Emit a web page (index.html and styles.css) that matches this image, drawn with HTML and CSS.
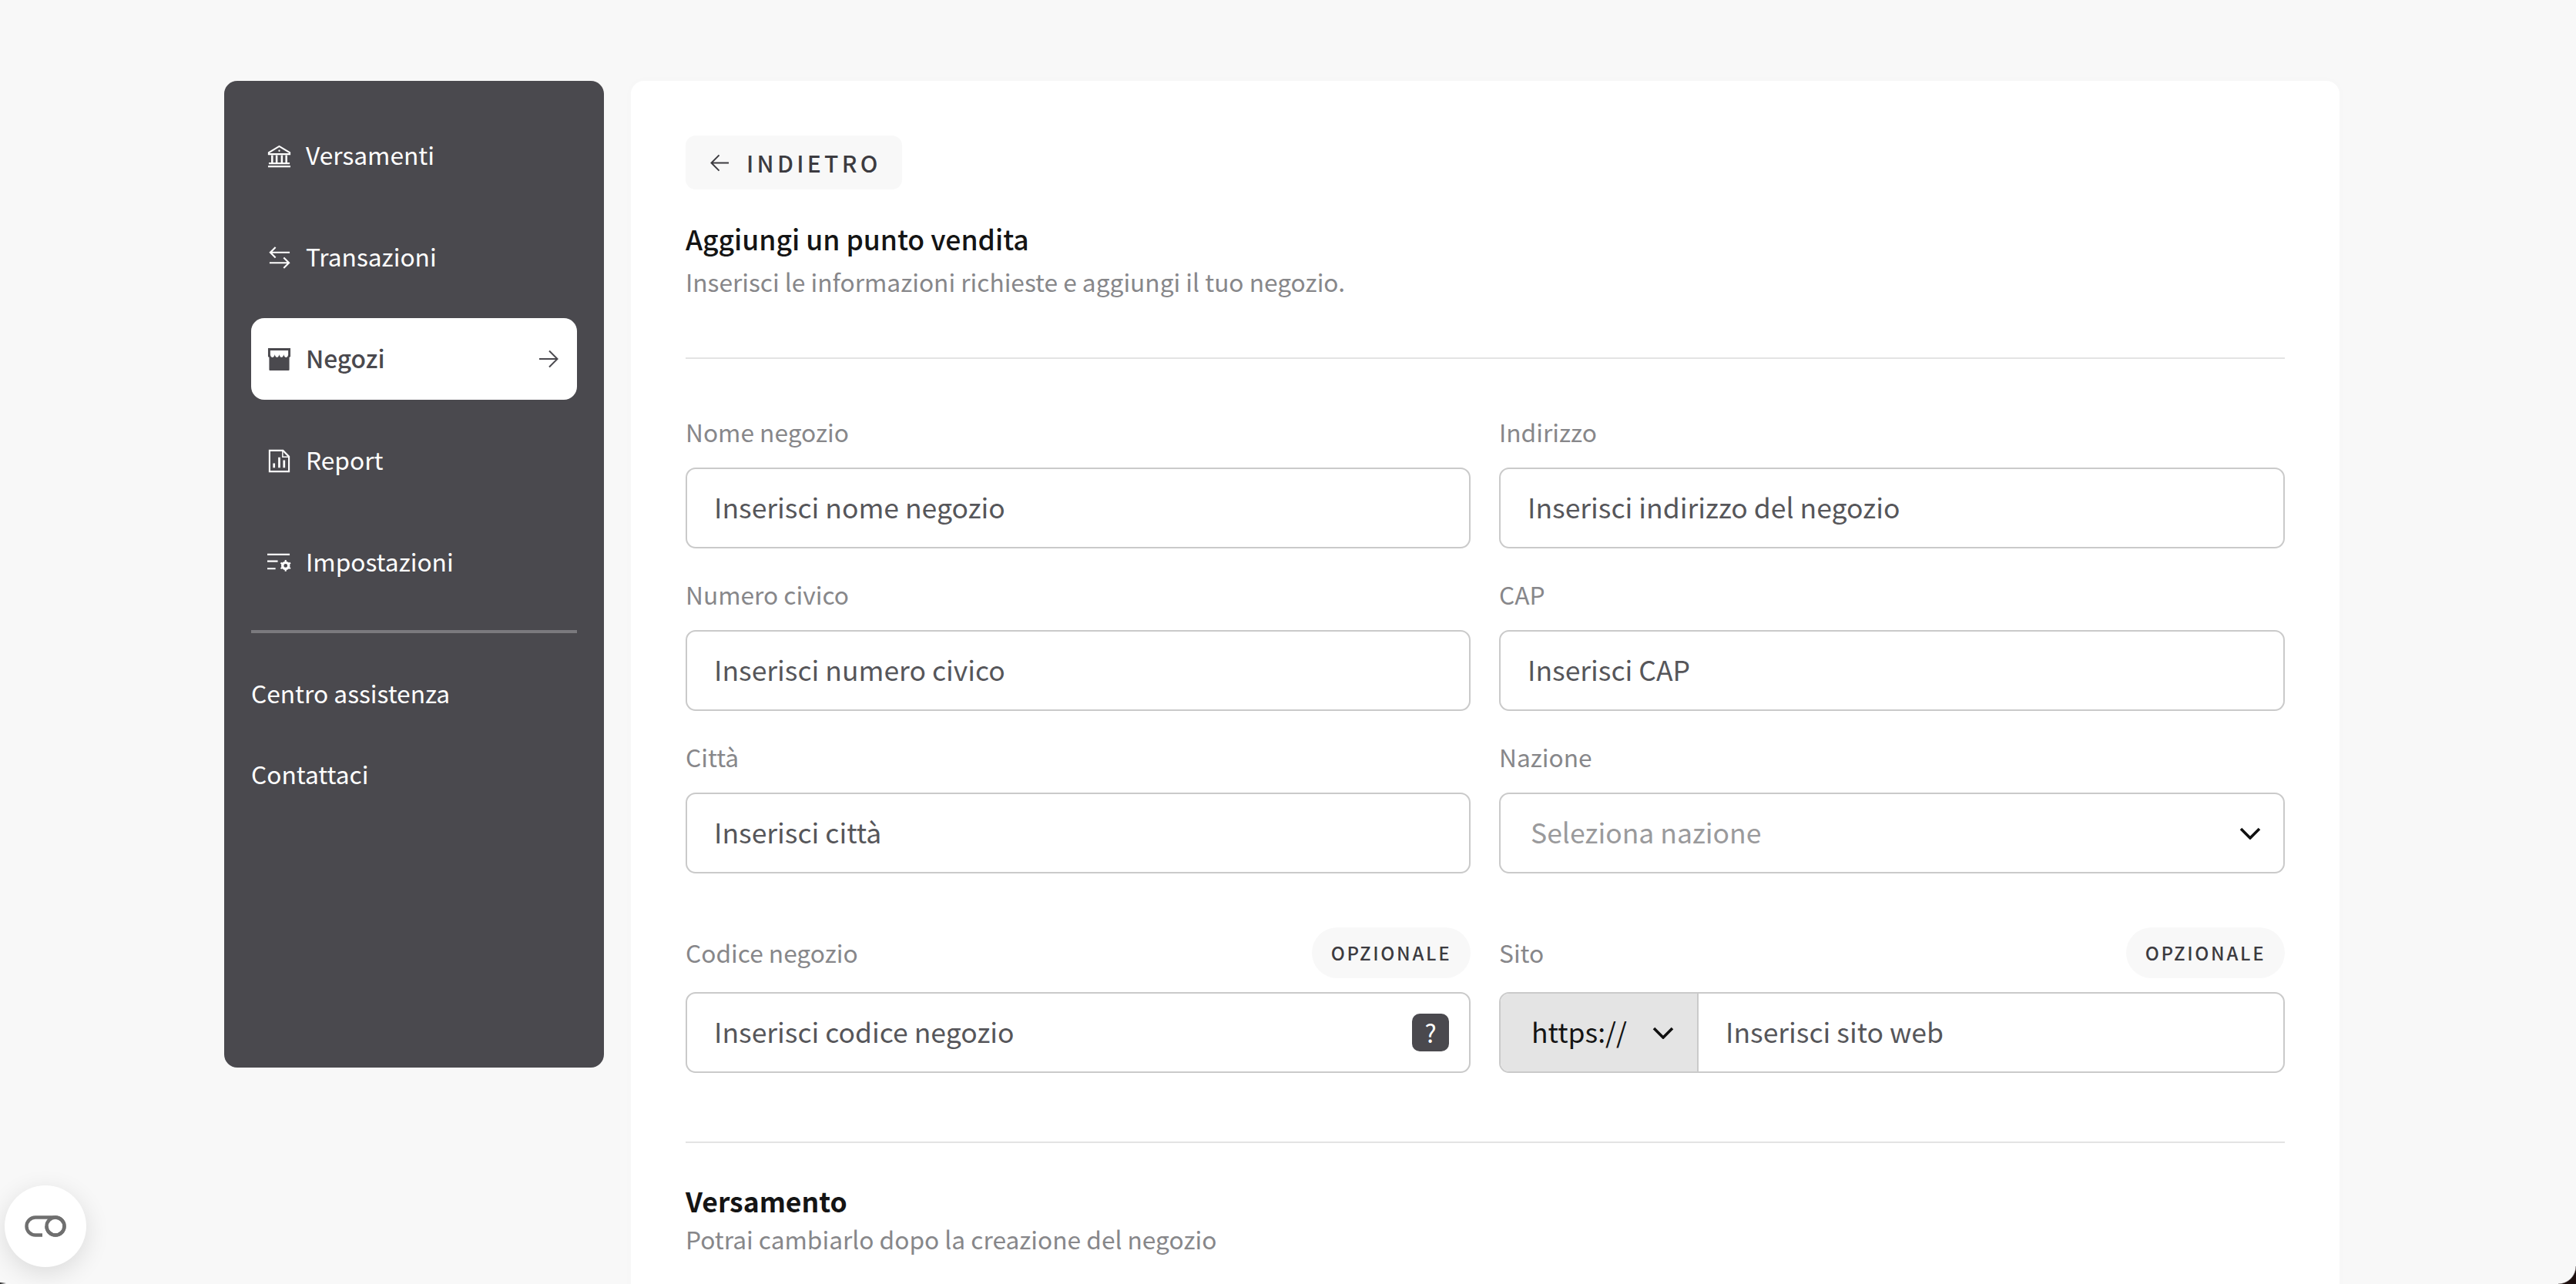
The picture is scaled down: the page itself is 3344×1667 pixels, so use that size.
FILE: index.html
```html
<!DOCTYPE html>
<html lang="it">
<head>
<meta charset="utf-8">
<title>Aggiungi un punto vendita</title>
<link rel="stylesheet" href="styles.css">
</head>
<body>
<div class="shell">
  <aside class="sidebar">
    <nav class="nav">
      <a class="nav-item">
        <svg class="nav-icon" viewBox="0 0 32 32" fill="none" stroke="currentColor" stroke-width="2.2"><path d="M2 11.500 16 3l14 8.500v2H2z"/><circle cx="16" cy="9" r="1.200" fill="currentColor" stroke="none"/><path d="M6.500 15v10M12.500 15v10M19.500 15v10M25.500 15v10" stroke-width="2.600"/><path d="M2 26h28M1 30h30"/></svg>
        <span>Versamenti</span>
      </a>
      <a class="nav-item">
        <svg class="nav-icon" viewBox="0 0 32 32" fill="none" stroke="currentColor" stroke-width="2.200"><path d="M30 9H4M11 2 4 9l7 7M3 23h26M22 16l7 7-7 7"/></svg>
        <span>Transazioni</span>
      </a>
      <a class="nav-item nav-item-active">
        <svg class="nav-icon" viewBox="0 0 32 32"><path fill="currentColor" d="M1 1h30v11.500l-1.500 1V30a1 1 0 0 1-1 1H3.500a1 1 0 0 1-1-1V13.500L1 12.500z"/><path fill="#fff" d="M4 4H28V10C27 14.500 23 14.500 22 9.500C21 14.500 17 14.500 16 9.500C15 14.500 11 14.500 10 9.500C9 14.500 5 14.500 4 10Z"/></svg>
        <span>Negozi</span>
        <svg class="nav-arrow" viewBox="0 0 26 26" fill="none" stroke="currentColor" stroke-width="2"><path d="M1 13h23M14 2.500 24.500 13 14 23.500"/></svg>
      </a>
      <a class="nav-item">
        <svg class="nav-icon" viewBox="0 0 32 32" fill="none" stroke="currentColor" stroke-width="2.200"><path d="M3 2h18l8 8v20H3z"/><path d="M20.500 2v8.500H29" stroke-width="1.500"/><path d="M9 19v6M16 11v14M22.500 15v10" stroke-width="2.800"/></svg>
        <span>Report</span>
      </a>
      <a class="nav-item">
        <svg class="nav-icon" viewBox="0 0 32 32" fill="none" stroke="currentColor" stroke-width="2.200"><path d="M0 5h30M0 14h14M0 24h11"/><circle cx="24.500" cy="20" r="4.200" stroke-width="3.400"/><path d="M24.500 12.500v15M18 16.300l13 7.500M31 16.300l-13 7.500" stroke-width="2.200" stroke-dasharray="2.500 10 2.500"/></svg>
        <span>Impostazioni</span>
      </a>
    </nav>
    <hr class="nav-rule">
    <a class="nav-link">Centro assistenza</a>
    <a class="nav-link">Contattaci</a>
  </aside>

  <main class="panel">
    <button class="back">
      <svg class="back-icon" viewBox="0 0 26 26" fill="none" stroke="currentColor" stroke-width="2"><path d="M25 13H2M12 2.500 1.500 13 12 23.500"/></svg>
      <span>INDIETRO</span>
    </button>
    <h1 class="title">Aggiungi un punto vendita</h1>
    <p class="subtitle">Inserisci le informazioni richieste e aggiungi il tuo negozio.</p>
    <hr class="rule rule-top">

    <div class="grid">
      <div class="field">
        <div class="label-row"><span class="label">Nome negozio</span></div>
        <div class="control"><span class="value">Inserisci nome negozio</span></div>
      </div>
      <div class="field">
        <div class="label-row"><span class="label">Indirizzo</span></div>
        <div class="control"><span class="value">Inserisci indirizzo del negozio</span></div>
      </div>
      <div class="field">
        <div class="label-row"><span class="label">Numero civico</span></div>
        <div class="control"><span class="value">Inserisci numero civico</span></div>
      </div>
      <div class="field">
        <div class="label-row"><span class="label">CAP</span></div>
        <div class="control"><span class="value">Inserisci CAP</span></div>
      </div>
      <div class="field">
        <div class="label-row"><span class="label">Città</span></div>
        <div class="control"><span class="value">Inserisci città</span></div>
      </div>
      <div class="field">
        <div class="label-row"><span class="label">Nazione</span></div>
        <div class="control control-select">
          <span class="value value-muted">Seleziona nazione</span>
          <svg class="chevron" viewBox="0 0 28 16" fill="none" stroke="currentColor" stroke-width="3.600"><path d="M2 2 14 14 26 2"/></svg>
        </div>
      </div>
      <div class="field field-optional">
        <div class="label-row"><span class="label">Codice negozio</span><span class="pill">OPZIONALE</span></div>
        <div class="control control-help">
          <span class="value">Inserisci codice negozio</span>
          <span class="help">?</span>
        </div>
      </div>
      <div class="field field-optional">
        <div class="label-row"><span class="label">Sito</span><span class="pill">OPZIONALE</span></div>
        <div class="control control-site">
          <div class="protocol">
            <span class="protocol-text">https://</span>
            <svg class="chevron" viewBox="0 0 28 16" fill="none" stroke="currentColor" stroke-width="3.600"><path d="M2 2 14 14 26 2"/></svg>
          </div>
          <span class="value">Inserisci sito web</span>
        </div>
      </div>
    </div>

    <hr class="rule rule-bottom">
    <h2 class="title title-second">Versamento</h2>
    <p class="subtitle subtitle-second">Potrai cambiarlo dopo la creazione del negozio</p>
  </main>

  <button class="fab" aria-label="Impostazioni cookie">
    <svg class="fab-icon" viewBox="0 0 54 28" fill="none" stroke="#6f6f6f" stroke-width="4.400"><path d="M23 25.500H14a11.500 11.500 0 0 1 0-23h26a11.500 11.500 0 1 1-11.500 11.500"/><circle cx="40" cy="14" r="11.500"/></svg>
  </button>
  <div class="corner-right"></div>
  <div class="corner-left"></div>
</div>
</body>
</html>
```
FILE: styles.css
```css
* { box-sizing: border-box; }
html, body { margin: 0; padding: 0; height: 100%; }
body {
  background: #f8f8f8;
  font-family: "Noto Sans CJK JP", "Noto Sans", sans-serif;
  color: #4a494e;
  overflow: hidden;
}
.shell {
  height: 1667px;
  overflow: hidden;
  padding: 105px 0 0 291px;
  display: flex;
  align-items: flex-start;
  gap: 35px;
}
.sidebar {
  width: 493px;
  height: 1281px;
  flex: none;
  background: #4a494e;
  border-radius: 17px;
  padding: 44px 35px 0;
  color: #fff;
}
.nav { display: flex; flex-direction: column; gap: 26px; }
.nav-item {
  height: 106px;
  display: flex;
  align-items: center;
  padding: 0 21px;
  gap: 19px;
  font-size: 31.7px;
  line-height: 42px;
  border-radius: 17px;
}
.nav-item span { padding-bottom: 4px; }
.nav-item-active { background: #fff; color: #4a494e; }
.nav-item-active span { font-weight: 500; }
.nav-icon { width: 31px; height: 31px; flex: none; }
.nav-arrow { width: 26px; height: 26px; margin-left: auto; margin-right: 3px; }
.nav-rule { border: 0; height: 4px; background: #7b7a7e; margin: 35px 0 55px; }
.nav-link { display: block; font-size: 31.7px; line-height: 44px; margin-bottom: 61px; }
.panel {
  width: 2218px;
  height: 1700px;
  flex: none;
  background: #fff;
  border-radius: 17px;
  padding: 71px 71px 0;
  box-shadow: 0 0 16px rgba(0, 0, 0, 0.015);
}
.back {
  width: 281px;
  height: 70px;
  display: flex;
  align-items: center;
  gap: 22px;
  padding: 0 0 0 32px;
  border: 0;
  border-radius: 13px;
  background: #f8f8f8;
  color: #3c3b40;
  font: 500 30px/40px "Noto Sans CJK JP", sans-serif;
  letter-spacing: 4.300px;
}
.back-icon { width: 25px; height: 25px; flex: none; }
.title {
  margin: 39px 0 0;
  font-size: 35.500px;
  line-height: 50px;
  font-weight: 500;
  color: #141414;
}
.subtitle {
  margin: 7px 0 0;
  font-size: 31.700px;
  line-height: 46px;
  font-weight: 400;
  color: #87878a;
}
.rule { border: 0; height: 2px; margin: 0; background: #e3e3e3; }
.rule-top { margin-top: 76px; }
.grid {
  display: grid;
  grid-template-columns: 1019px 1020px;
  column-gap: 37px;
  margin-top: 74px;
}
.field { display: flex; flex-direction: column; height: 211px; }
.field-optional { height: auto; margin-top: 31px; }
.label-row {
  height: 67px;
  display: flex;
  align-items: flex-start;
  justify-content: space-between;
}
.field-optional .label-row { height: 84px; }
.label { font-size: 31.700px; line-height: 40px; color: #87878a; }
.field-optional .label { line-height: 64px; }
.pill {
  height: 66px;
  width: 206px;
  border-radius: 33px;
  background: #f8f8f8;
  font-size: 24px;
  line-height: 66px;
  font-weight: 500;
  letter-spacing: 2.700px;
  text-align: center;
  color: #3c3b40;
}
.control {
  height: 105px;
  border: 2px solid #cacaca;
  border-radius: 13px;
  display: flex;
  align-items: center;
  padding: 0 35px;
  background: #fff;
}
.value { font-size: 35.500px; line-height: 50px; color: #56565a; padding-bottom: 4px; }
.value-muted { color: #9a9a9c; margin-left: 4px; }
.control-select { justify-content: space-between; padding-right: 29px; }
.chevron { width: 28px; height: 16px; color: #111; flex: none; }
.control-help { justify-content: space-between; padding-right: 26px; }
.help {
  width: 48px;
  height: 49px;
  border-radius: 10px;
  background: #4a494e;
  color: #fff;
  font-size: 32px;
  line-height: 49px;
  text-align: center;
}
.control-site { padding: 0; overflow: hidden; }
.protocol {
  width: 257px;
  height: 100%;
  flex: none;
  background: #e4e4e4;
  border-right: 2px solid #cacaca;
  display: flex;
  align-items: center;
  justify-content: space-between;
  padding: 0 30px 0 40px;
  font-size: 35.500px;
  line-height: 50px;
  color: #141414;
}
.protocol-text { padding-bottom: 4px; }
.control-site .value { margin-left: 35px; }
.rule-bottom { margin-top: 89px; }
.title-second { margin-top: 50px; font-weight: 700; }
.subtitle-second { margin-top: 1px; }
.fab {
  position: absolute;
  left: 6px;
  top: 1539px;
  width: 106px;
  height: 106px;
  padding: 0;
  border: 0;
  border-radius: 50%;
  background: #fff;
  box-shadow: 0 8px 32px rgba(0, 0, 0, 0.12);
  display: flex;
  align-items: center;
  justify-content: center;
}
.fab-icon { width: 54px; height: 28px; }
.corner-right {
  position: absolute;
  right: 0;
  top: 1644px;
  width: 23px;
  height: 23px;
  background: radial-gradient(circle at 0 0, transparent 22px, #1c0e0e 23.500px);
}
.corner-left {
  position: absolute;
  left: 0;
  top: 1665px;
  width: 8px;
  height: 2px;
  background: linear-gradient(90deg, #222, rgba(34, 34, 34, 0));
}
```
